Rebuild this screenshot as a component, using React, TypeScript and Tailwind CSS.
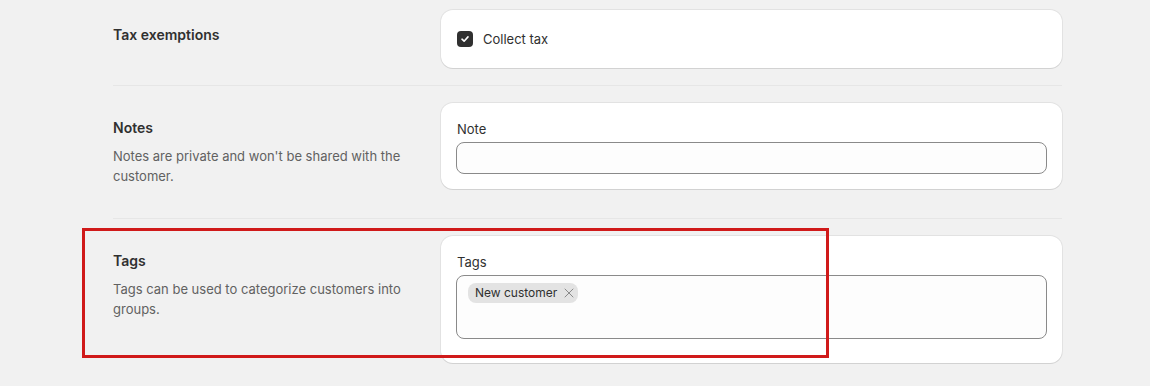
import { X } from "lucide-react";

const Card = ({ children, className }: { children: React.ReactNode; className?: string }) => (
  <div
    className={
      "bg-white rounded-xl shadow-[0_1px_0_0_rgba(26,26,26,0.08),0_0_0_1px_rgba(0,0,0,0.06)] " +
      (className ?? "")
    }
  >
    {children}
  </div>
);

const Section = ({
  title,
  desc,
  children,
  className,
}: {
  title: string;
  desc?: string;
  children: React.ReactNode;
  className?: string;
}) => (
  <div className={"grid grid-cols-[328px_621px] " + (className ?? "")}>
    <div className="pt-[15px] pr-6">
      <h2 className="text-[14px] leading-5 font-semibold text-[#303030]">{title}</h2>
      {desc && <p className="mt-2 text-[13px] leading-5 text-[#616161]">{desc}</p>}
    </div>
    {children}
  </div>
);

export default function App() {
  return (
    <div
      className="relative w-full h-[386px] overflow-hidden bg-[#f1f1f1] text-[#303030]"
      style={{ fontFamily: "Inter, 'Noto Sans', sans-serif" }}
    >
      <div className="ml-[113px] w-[949px]">
        {/* Tax exemptions */}
        <Section title="Tax exemptions" className="pt-[10px] pb-[17px] border-b border-[#e6e6e6]">
          <Card className="px-4 py-4">
            <label className="flex items-center gap-[10px] h-[26px]">
              <span className="w-4 h-4 rounded-[4px] bg-[#303030] flex items-center justify-center">
                <svg width="10" height="10" viewBox="0 0 10 10" fill="none">
                  <path
                    d="M2 5.2 4.1 7.2 8 2.9"
                    stroke="white"
                    strokeWidth="1.6"
                    strokeLinecap="round"
                    strokeLinejoin="round"
                  />
                </svg>
              </span>
              <span className="text-[13px] leading-5">Collect tax</span>
            </label>
          </Card>
        </Section>

        {/* Notes */}
        <Section
          title="Notes"
          desc="Notes are private and won't be shared with the customer."
          className="pt-[17px] pb-[29px] border-b border-[#e6e6e6]"
        >
          <Card className="px-[15px] pt-4 pb-[15px]">
            <div className="pl-px text-[13px] leading-5 mb-[3px]">Note</div>
            <div className="h-8 rounded-lg border border-[#8a8a8a] bg-[#fdfdfd]" />
          </Card>
        </Section>

        {/* Tags */}
        <Section
          title="Tags"
          desc="Tags can be used to categorize customers into groups."
          className="pt-[17px]"
        >
          <Card className="px-[15px] pt-4 pb-6">
            <div className="pl-px text-[13px] leading-5 mb-[3px]">Tags</div>
            <div className="h-16 flex items-start rounded-lg border border-[#8a8a8a] bg-[#fdfdfd] pl-[11px] pt-[7px]">
              <span className="inline-flex items-center h-5 rounded-lg bg-[#e3e3e3] pl-[7px] pr-px text-[12px] leading-5 text-[#303030]">
                New customer
                <X size={16} strokeWidth={1.5} className="ml-[4px] text-[#8a8a8a]" />
              </span>
            </div>
          </Card>
        </Section>
      </div>

      {/* annotation highlight */}
      <div className="absolute left-[82px] top-[228px] w-[747px] h-[130px] border-[3px] border-[#d01a1a] pointer-events-none" />
    </div>
  );
}
